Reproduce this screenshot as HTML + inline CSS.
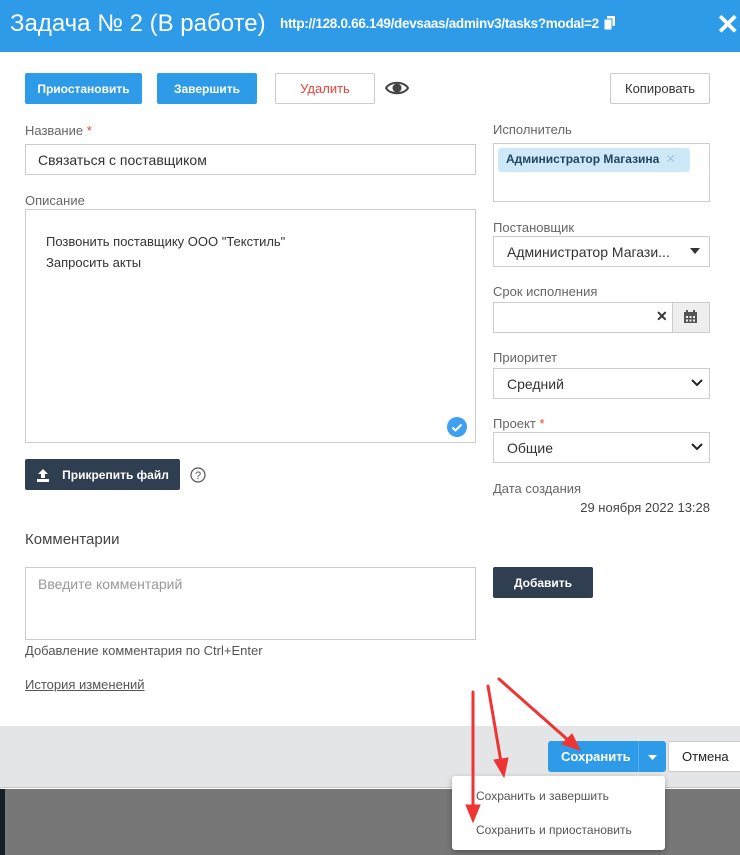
<!DOCTYPE html>
<html><head><meta charset="utf-8"><style>
*{box-sizing:border-box;margin:0;padding:0}
body{width:740px;height:855px;position:relative;overflow:hidden;background:#fff;font-family:"Liberation Sans",sans-serif;color:#333}
.a{position:absolute}
.lbl{position:absolute;font-size:13px;color:#666}
.box{position:absolute;border:1px solid #ccc;background:#fff}
.btn{position:absolute;display:flex;align-items:center;justify-content:center;font-size:12px;font-weight:bold;border-radius:2px}
.blue{background:#2d9be8;color:#fff}
.sel{position:absolute;border:1px solid #ccc;background:#fff;font-size:14px;color:#333;padding-left:13px;display:flex;align-items:center}
.chev{position:absolute;right:6px;top:10px}
</style></head><body>
<div class="a" style="left:0;top:0;width:740px;height:52px;background:#2d9be8"></div>
<div class="a" style="left:10px;top:10px;font-size:24px;color:#fff">Задача № 2 (В работе)</div>
<div class="a" style="left:280px;top:16px;font-size:13.5px;color:#fff;font-weight:bold;letter-spacing:-0.3px">http://128.0.66.149/devsaas/adminv3/tasks?modal=2</div>
<svg class="a" style="left:604px;top:16px" width="12" height="14"><rect x="3" y="0" width="8" height="10" fill="#fff"/><rect x="0" y="3" width="8" height="11" fill="#fff" stroke="#2d9be8"/></svg>
<div class="a" style="left:716px;top:8px;font-size:28px;color:#fff;font-weight:bold">✕</div>

<div class="btn blue" style="left:25px;top:73px;width:117px;height:31px">Приостановить</div>
<div class="btn blue" style="left:157px;top:73px;width:100px;height:31px">Завершить</div>
<div class="btn" style="left:275px;top:73px;width:100px;height:31px;border:1px solid #ccc;color:#e8413c;font-weight:normal;font-size:13px">Удалить</div>
<svg class="a" style="left:385px;top:79px" width="24" height="18" viewBox="0 0 24 18"><path d="M1 9C5 2 19 2 23 9C19 16 5 16 1 9Z" fill="#fff" stroke="#444" stroke-width="2"/><circle cx="12" cy="9" r="4.5" fill="#444"/></svg>
<div class="btn" style="left:610px;top:73px;width:100px;height:31px;border:1px solid #ccc;color:#333;font-weight:normal;font-size:13px">Копировать</div>

<div class="lbl" style="left:25px;top:123px">Название <span style="color:#e8413c">*</span></div>
<div class="box" style="left:25px;top:144px;width:451px;height:31px;font-size:14px;padding:7px 12px">Связаться с поставщиком</div>
<div class="lbl" style="left:25px;top:193px">Описание</div>
<div class="box" style="left:25px;top:209px;width:451px;height:234px;font-size:13px;line-height:21px;padding:21px 20px">Позвонить поставщику ООО "Текстиль"<br>Запросить акты</div>
<svg class="a" style="left:447px;top:417px" width="20" height="20"><circle cx="10" cy="10" r="10" fill="#3fa0ee"/><path d="M5.5 10.5l3 3 6-6" stroke="#fff" stroke-width="2" fill="none"/></svg>
<div class="btn" style="left:25px;top:459px;width:155px;height:31px;background:#2f3e50;color:#fff;font-size:12px"><svg width="14" height="14" style="margin-right:12px"><path d="M7 1l-5 5h3v4h4V6h3z M1 11h12v3H1z" fill="#fff"/></svg>Прикрепить файл</div>
<svg class="a" style="left:190px;top:467px" width="16" height="16"><circle cx="8" cy="8" r="7" fill="none" stroke="#555" stroke-width="1.2"/><text x="8" y="12" text-anchor="middle" font-size="11" fill="#555" font-family="Liberation Sans">?</text></svg>

<div class="lbl" style="left:493px;top:122px">Исполнитель</div>
<div class="box" style="left:493px;top:143px;width:217px;height:59px"></div>
<div class="a" style="left:498px;top:148px;width:192px;height:24px;background:#cde9f7;border-radius:3px;font-size:12px;color:#1f4660;font-weight:bold;padding:4px 8px">Администратор Магазина <span style="color:#9cc6de;font-weight:normal;margin-left:3px">✕</span></div>
<div class="lbl" style="left:493px;top:220px">Постановщик</div>
<div class="sel" style="left:493px;top:236px;width:217px;height:31px">Администратор Магази...</div>
<svg class="a" style="left:690px;top:248px" width="10" height="6"><path d="M0 0h10L5 6z" fill="#333"/></svg>
<div class="lbl" style="left:493px;top:284px">Срок исполнения</div>
<div class="box" style="left:493px;top:302px;width:217px;height:31px"></div>
<div class="a" style="left:656px;top:308px;font-size:14px;font-weight:bold;color:#333">✕</div>
<div class="a" style="left:672px;top:302px;width:38px;height:31px;background:#eee;border:1px solid #ccc"></div>
<svg class="a" style="left:684px;top:310px" width="13" height="13"><rect x="0" y="2" width="13" height="11" fill="#555"/><rect x="2" y="0" width="2" height="3" fill="#555"/><rect x="9" y="0" width="2" height="3" fill="#555"/><g fill="#eee"><rect x="2" y="6" width="2" height="2"/><rect x="5.5" y="6" width="2" height="2"/><rect x="9" y="6" width="2" height="2"/><rect x="2" y="9.5" width="2" height="2"/><rect x="5.5" y="9.5" width="2" height="2"/><rect x="9" y="9.5" width="2" height="2"/></g></svg>
<div class="lbl" style="left:493px;top:350px">Приоритет</div>
<div class="sel" style="left:493px;top:368px;width:217px;height:31px">Средний<svg class="chev" width="12" height="8"><path d="M1 1l5 5 5-5" stroke="#222" stroke-width="2" fill="none"/></svg></div>
<div class="lbl" style="left:493px;top:416px">Проект <span style="color:#e8413c">*</span></div>
<div class="sel" style="left:493px;top:432px;width:217px;height:31px">Общие<svg class="chev" width="12" height="8"><path d="M1 1l5 5 5-5" stroke="#222" stroke-width="2" fill="none"/></svg></div>
<div class="lbl" style="left:493px;top:481px">Дата создания</div>
<div class="a" style="left:493px;top:500px;width:217px;text-align:right;font-size:13px;color:#444">29 ноября 2022 13:28</div>

<div class="a" style="left:25px;top:531px;font-size:15px;color:#444">Комментарии</div>
<div class="box" style="left:25px;top:567px;width:451px;height:73px;font-size:14px;color:#999;padding:8px 12px">Введите комментарий</div>
<div class="btn" style="left:493px;top:567px;width:100px;height:31px;background:#2f3e50;color:#fff">Добавить</div>
<div class="a" style="left:25px;top:643px;font-size:13px;color:#555">Добавление комментария по Ctrl+Enter</div>
<div class="a" style="left:25px;top:677px;font-size:13px;color:#555;text-decoration:underline">История изменений</div>

<div class="a" style="left:0;top:726px;width:740px;height:62px;background:#e4e5e7;border-bottom:1px solid #c4c4c4"></div>
<div class="a" style="left:0;top:789px;width:740px;height:66px;background:#777"></div>
<div class="a" style="left:0;top:789px;width:5px;height:66px;background:#161f28"></div>
<div class="btn blue" style="left:548px;top:741px;width:118px;height:31px;border-radius:3px;font-size:13px;justify-content:flex-start;padding-left:13px">Сохранить</div>
<div class="a" style="left:638px;top:741px;width:1px;height:31px;background:#5ab0ee"></div>
<svg class="a" style="left:648px;top:755px" width="9" height="5"><path d="M0 0h9L4.5 5z" fill="#fff"/></svg>
<div class="btn" style="left:668px;top:741px;width:80px;height:31px;background:#fff;border:1px solid #ccc;color:#222;font-weight:normal;font-size:13px;justify-content:flex-start;padding-left:13px">Отмена</div>
<div class="a" style="left:452px;top:776px;width:213px;height:74px;background:#fff;border-radius:3px;box-shadow:0 2px 6px rgba(0,0,0,.3)"></div>
<div class="a" style="left:476px;top:789px;font-size:12px;color:#555">Сохранить и завершить</div>
<div class="a" style="left:476px;top:823px;font-size:12px;color:#555">Сохранить и приостановить</div>

<svg class="a" style="left:0;top:0" width="740" height="855">
<g stroke="#ee3434" stroke-width="3" fill="#ee3434" stroke-linecap="round">
<line x1="473" y1="692" x2="473" y2="808"/><path d="M466 805L473 822L480 805Z" stroke-width="1"/>
<line x1="488" y1="686" x2="501" y2="762"/><path d="M494 760L504 777L508 758Z" stroke-width="1"/>
<line x1="499" y1="679" x2="568" y2="740"/><path d="M562 744L580 750L572 734Z" stroke-width="1"/>
</g></svg>
</body></html>
